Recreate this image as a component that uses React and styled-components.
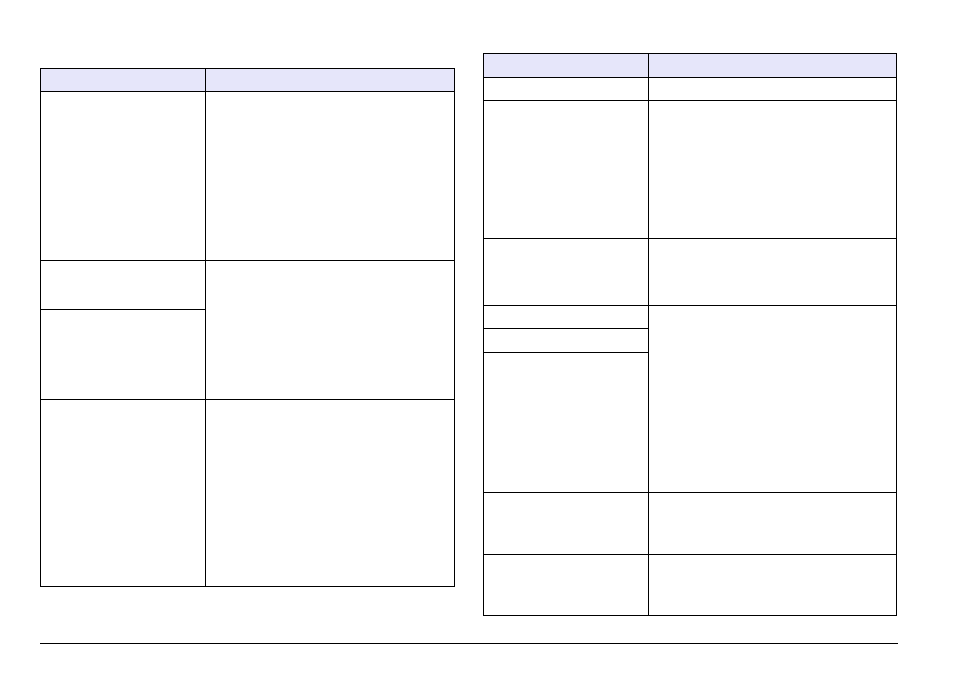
import React from 'react'
import styled, { createGlobalStyle } from 'styled-components'

const GlobalStyle = createGlobalStyle`
  html, body {
    margin: 0;
    padding: 0;
    background: #fff;
    font-family: 'Liberation Sans', Arial, sans-serif;
  }
`
const Page = styled.div`
  width: 954px;
  height: 673px;
  padding-left: 40px;
  box-sizing: border-box;
  overflow: hidden;
`
const Columns = styled.div`
  display: flex;
  align-items: flex-start;
  gap: 28px;
  height: 643px;
`
const Table = styled.div`
  display: grid;
  grid-template-columns: ${(props) => props.cols};
  grid-template-rows: ${(props) => props.rows};
  gap: 1px;
  padding: 1px;
  margin-top: ${(props) => props.top}px;
  background: #000;
`
const HeadCell = styled.div`
  background: #e6e6fa;
`
const Cell = styled.div`
  background: #fff;
  grid-column: ${(props) => props.col};
  grid-row: ${(props) => (props.span ? `span ${props.span}` : 'auto')};
`
const Rule = styled.div`
  width: 858px;
  height: 1px;
  background: #000;
`

const leftRows = [22, 168, 48, 89, 186]
const rightRows = [23, 22, 137, 66, 22, 23, 139, 61, 60]

export default function App() {
  return (
    <Page>
      <GlobalStyle />
      <Columns>
        <Table top={68} cols="164px 248px" rows={leftRows.map((h) => `${h}px`).join(' ')}>
          <HeadCell />
          <HeadCell />
          <Cell col={1} />
          <Cell col={2} />
          <Cell col={1} />
          <Cell col={2} span={2} />
          <Cell col={1} />
          <Cell col={1} />
          <Cell col={2} />
        </Table>
        <Table top={53} cols="164px 247px" rows={rightRows.map((h) => `${h}px`).join(' ')}>
          <HeadCell />
          <HeadCell />
          <Cell col={1} />
          <Cell col={2} />
          <Cell col={1} />
          <Cell col={2} />
          <Cell col={1} />
          <Cell col={2} />
          <Cell col={1} />
          <Cell col={2} span={3} />
          <Cell col={1} />
          <Cell col={1} />
          <Cell col={1} />
          <Cell col={2} />
          <Cell col={1} />
          <Cell col={2} />
        </Table>
      </Columns>
      <Rule />
    </Page>
  )
}
